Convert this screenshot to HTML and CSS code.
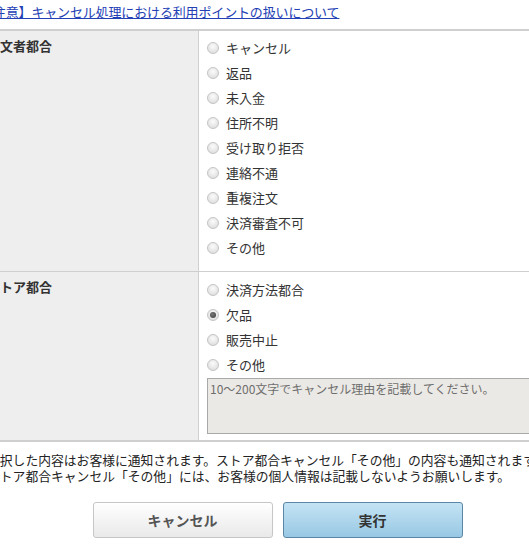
FILE: index.html
```html
<!DOCTYPE html>
<html lang="ja">
<head>
<meta charset="utf-8">
<title>キャンセル処理</title>
<link rel="stylesheet" href="styles.css">
</head>
<body>
<div class="page">
  <div class="notice"><a href="#">【注意】キャンセル処理における利用ポイントの扱いについて</a></div>
  <div class="table">
    <div class="row row-first">
      <div class="th">注文者都合</div>
      <div class="td">
        <label class="opt"><input type="radio" name="reason"><span>キャンセル</span></label>
        <label class="opt"><input type="radio" name="reason"><span>返品</span></label>
        <label class="opt"><input type="radio" name="reason"><span>未入金</span></label>
        <label class="opt"><input type="radio" name="reason"><span>住所不明</span></label>
        <label class="opt"><input type="radio" name="reason"><span>受け取り拒否</span></label>
        <label class="opt"><input type="radio" name="reason"><span>連絡不通</span></label>
        <label class="opt"><input type="radio" name="reason"><span>重複注文</span></label>
        <label class="opt"><input type="radio" name="reason"><span>決済審査不可</span></label>
        <label class="opt"><input type="radio" name="reason"><span>その他</span></label>
      </div>
    </div>
    <div class="row row-second">
      <div class="th">ストア都合</div>
      <div class="td">
        <label class="opt"><input type="radio" name="reason"><span>決済方法都合</span></label>
        <label class="opt"><input type="radio" name="reason" checked><span>欠品</span></label>
        <label class="opt"><input type="radio" name="reason"><span>販売中止</span></label>
        <label class="opt"><input type="radio" name="reason"><span>その他</span></label>
        <textarea class="memo" placeholder="10～200文字でキャンセル理由を記載してください。" disabled></textarea>
      </div>
    </div>
  </div>
  <p class="note">選択した内容はお客様に通知されます。ストア都合キャンセル「その他」の内容も通知されます。<br>ストア都合キャンセル「その他」には、お客様の個人情報は記載しないようお願いします。</p>
  <div class="actions">
    <button class="btn btn-cancel" type="button">キャンセル</button>
    <button class="btn btn-run" type="button">実行</button>
  </div>
</div>
</body>
</html>
```

FILE: styles.css
```css
html, body {
  margin: 0;
  padding: 0;
  overflow: hidden;
  background: #ffffff;
}

body {
  font-family: "Noto Sans CJK JP", "Noto Sans", sans-serif;
  font-size: 13px;
  color: #333333;
}

.page {
  margin-left: -21px;
  width: 597px;
}

.notice {
  height: 29px;
  line-height: 24px;
  padding-left: 1px;
  white-space: nowrap;
}

.notice a {
  color: #2340b5;
  text-decoration: underline;
  letter-spacing: -0.15px;
}

.table {
  border-top: 2px solid #cfcfcf;
  border-bottom: 2px solid #cfcfcf;
}

.row {
  display: flex;
}

.row-first {
  border-bottom: 1px solid #cfcfcf;
}

.th {
  box-sizing: border-box;
  width: 220px;
  flex: none;
  background: #eeeeee;
  border-right: 1px solid #d0d0d0;
  padding: 6px 8px 0 8px;
  line-height: 18px;
  font-weight: bold;
  color: #333333;
}

.td {
  flex: 1;
  display: flex;
  flex-direction: column;
  padding: 4px 0 11px 8px;
}

.row-second .td {
  padding: 5px 0 6px 8px;
}

.opt {
  display: flex;
  align-items: center;
  height: 25px;
  gap: 7px;
  color: #333333;
}

.opt input {
  appearance: none;
  -webkit-appearance: none;
  margin: 0;
  width: 12px;
  height: 12px;
  border-radius: 50%;
  border: 1px solid #c4c4c4;
  background: radial-gradient(circle at 50% 35%, #fbfbfb 0%, #e6e6e6 60%, #d6d6d6 100%);
  box-sizing: border-box;
  position: relative;
  flex: none;
}

.opt input:checked::after {
  content: "";
  position: absolute;
  left: 2px;
  top: 2px;
  width: 6px;
  height: 6px;
  border-radius: 50%;
  background: radial-gradient(circle at 40% 40%, #777777 0%, #3a3a3a 100%);
}

.memo {
  box-sizing: border-box;
  display: block;
  width: 380px;
  height: 56px;
  margin: 1px 0 0 0;
  padding: 2px 2px;
  border: 1px solid #a9a9a9;
  background: #ebe9e5;
  font-family: "Noto Sans CJK JP", "Noto Sans", sans-serif;
  font-size: 12px;
  line-height: 16px;
  resize: none;
  color: #666666;
}

.memo::placeholder {
  color: #6e6e6e;
  opacity: 1;
}

.note {
  margin: 10px 0 0 0;
  padding-left: 8px;
  font-size: 12.8px;
  line-height: 16px;
  white-space: nowrap;
  color: #222222;
}

.actions {
  display: flex;
  justify-content: center;
  gap: 10px;
  margin-top: 18px;
}

.btn {
  box-sizing: border-box;
  width: 180px;
  height: 36px;
  border-radius: 3px;
  font-family: "Noto Sans CJK JP", "Noto Sans", sans-serif;
  font-size: 14px;
  font-weight: bold;
  color: #444444;
  padding: 0;
  cursor: pointer;
}

.btn-cancel {
  border: 1px solid #c6c6c6;
  background: linear-gradient(#ffffff, #e9e9e9);
  color: #555555;
}

.btn-run {
  border: 1px solid #5b87a6;
  background: linear-gradient(#c4e3f4, #98c8e4);
  color: #333333;
}
```
